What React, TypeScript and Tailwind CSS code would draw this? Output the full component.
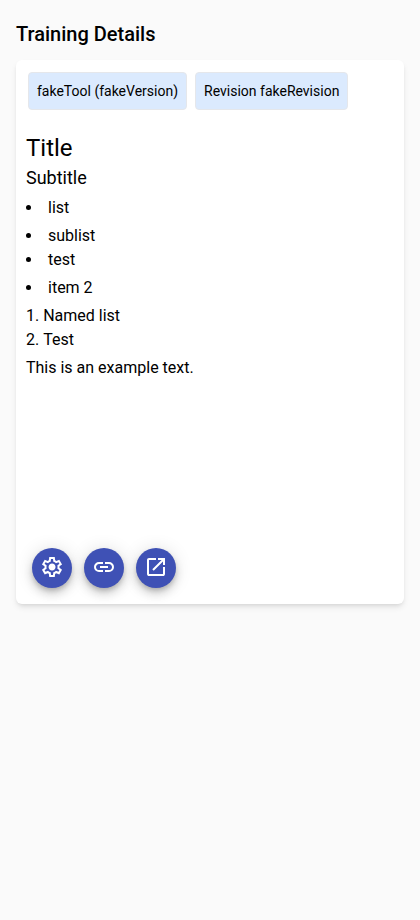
import React from "react";

const settingsPath =
  "m370-80-16-128q-13-5-24.5-12T307-235l-119 50L78-375l103-78q-1-7-1-13.5v-27q0-6.5 1-13.5L78-585l110-190 119 50q11-8 23-15t24-12l16-128h220l16 128q13 5 24.5 12t22.5 15l119-50 110 190-103 78q1 7 1 13.5v27q0 6.5-2 13.5l103 78-110 190-118-50q-11 8-23 15t-24 12L590-80H370Zm70-80h79l14-106q31-8 57.5-23.5T639-327l99 41 39-68-86-65q5-14 7-29.5t2-31.5q0-16-2-31.5t-7-29.5l86-65-39-68-99 42q-22-23-48.5-38.5T533-694l-13-106h-79l-14 106q-31 8-57.5 23.5T321-633l-99-41-39 68 86 64q-5 15-7 30t-2 32q0 16 2 31t7 30l-86 65 39 68 99-42q22 23 48.5 38.5T427-266l13 106Zm42-180q58 0 99-41t41-99q0-58-41-99t-99-41q-59 0-99.5 41T342-480q0 58 40.5 99t99.5 41Z";
const linkPath =
  "M440-280H280q-83 0-141.5-58.5T80-480q0-83 58.5-141.5T280-680h160v80H280q-50 0-85 35t-35 85q0 50 35 85t85 35h160v80ZM320-440v-80h320v80H320Zm200 160v-80h160q50 0 85-35t35-85q0-50-35-85t-85-35H520v-80h160q83 0 141.5 58.5T880-480q0 83-58.5 141.5T680-280H520Z";
const openPath =
  "M200-120q-33 0-56.5-23.5T120-200v-560q0-33 23.5-56.5T200-840h280v80H200v560h560v-280h80v280q0 33-23.5 56.5T760-120H200Zm188-212-56-56 372-372H560v-80h280v280h-80v-144L388-332Z";

function Chip({ children }: { children: React.ReactNode }) {
  return (
    <span className="flex h-[38px] items-center rounded border border-gray-200 bg-blue-100 px-2 text-sm whitespace-nowrap">
      {children}
    </span>
  );
}

function Fab({ label, path }: { label: string; path: string }) {
  return (
    <button
      aria-label={label}
      className="flex size-10 items-center justify-center rounded-full bg-[#3f51b5] pb-0.5 text-white shadow-[0px_3px_5px_-1px_rgba(0,0,0,0.2),0px_6px_10px_0px_rgba(0,0,0,0.14),0px_1px_18px_0px_rgba(0,0,0,0.12)]"
    >
      <svg viewBox="0 -960 960 960" className="size-6" fill="currentColor">
        <path d={path} />
      </svg>
    </button>
  );
}

export default function App() {
  return (
    <main className="min-h-screen bg-[#fafafa] px-4 pt-[18px] font-[Roboto,sans-serif] text-base leading-6 text-black">
      <h1 className="text-xl leading-8 font-medium">Training Details</h1>
      <section className="mt-[10px] flex h-[544px] flex-col rounded-md bg-white shadow-md">
        <div className="flex gap-2 px-3 pt-3">
          <Chip>fakeTool (fakeVersion)</Chip>
          <Chip>Revision fakeRevision</Chip>
        </div>
        <article className="flex-1 px-[10px] pt-[22px]">
          <h2 className="text-2xl leading-8">Title</h2>
          <h3 className="mb-1 text-lg leading-7">Subtitle</h3>
          <ul className="list-inside list-disc">
            <li>list</li>
            <li className="mt-1">sublist</li>
            <li>test</li>
            <li className="mt-1">item 2</li>
          </ul>
          <ol className="mt-1 list-inside list-decimal">
            <li>Named list</li>
            <li>Test</li>
          </ol>
          <p className="mt-1">This is an example text.</p>
        </article>
        <div className="flex gap-3 px-4 pb-4">
          <Fab label="Settings" path={settingsPath} />
          <Fab label="Link" path={linkPath} />
          <Fab label="Open" path={openPath} />
        </div>
      </section>
    </main>
  );
}
